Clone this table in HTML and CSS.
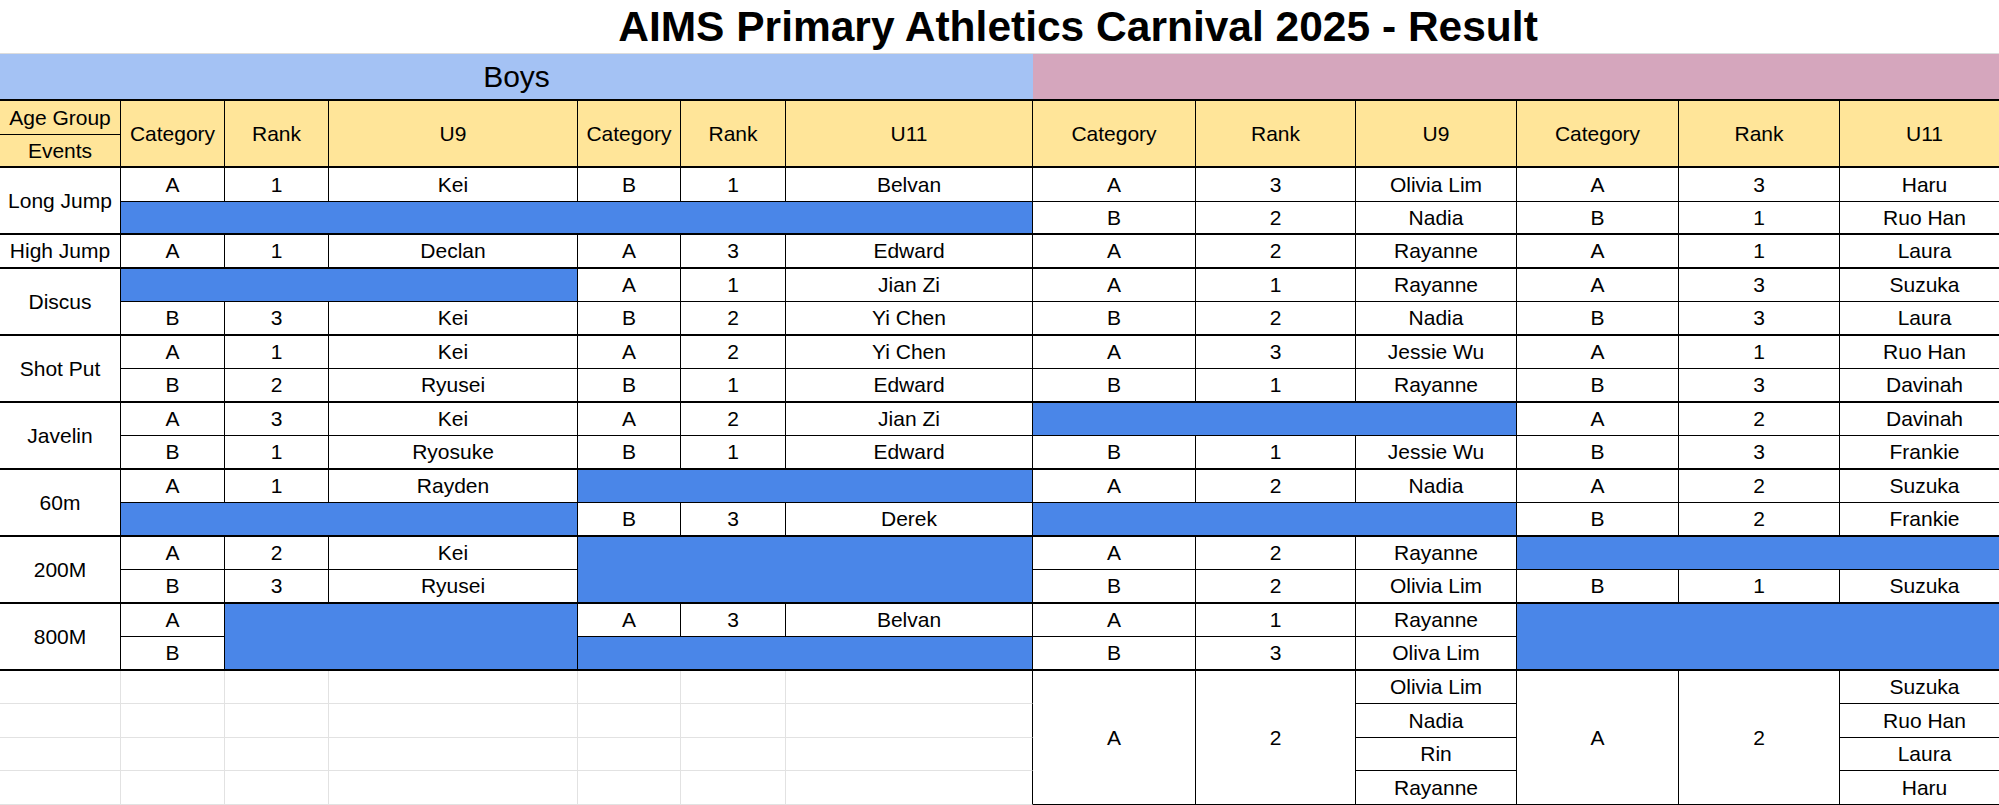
FILE: index.html
```html
<!DOCTYPE html>
<html lang="en">
<head>
<meta charset="utf-8">
<title>AIMS Primary Athletics Carnival 2025 - Result</title>
<link rel="stylesheet" href="styles.css">
</head>
<body>
<h1 class="title">AIMS Primary Athletics Carnival 2025 - Result</h1>
<div class="sheet">
  <div class="c band-boys g">Boys</div>
  <div class="c band-girls g"></div>

  <div class="c hd first">Age Group</div>
  <div class="c hd r2 g">Category</div>
  <div class="c hd r2 g">Rank</div>
  <div class="c hd r2 g">U9</div>
  <div class="c hd r2 g">Category</div>
  <div class="c hd r2 g">Rank</div>
  <div class="c hd r2 g">U11</div>
  <div class="c hd r2 g">Category</div>
  <div class="c hd r2 g">Rank</div>
  <div class="c hd r2 g">U9</div>
  <div class="c hd r2 g">Category</div>
  <div class="c hd r2 g">Rank</div>
  <div class="c hd r2 g">U11</div>
  <div class="c hd first g">Events</div>

  <!-- Long Jump -->
  <div class="c first r2 g">Long Jump</div>
  <div class="c">A</div><div class="c">1</div><div class="c">Kei</div>
  <div class="c">B</div><div class="c">1</div><div class="c">Belvan</div>
  <div class="c">A</div><div class="c">3</div><div class="c">Olivia Lim</div>
  <div class="c">A</div><div class="c">3</div><div class="c">Haru</div>
  <div class="c fill s6 g"></div>
  <div class="c g">B</div><div class="c g">2</div><div class="c g">Nadia</div>
  <div class="c g">B</div><div class="c g">1</div><div class="c g">Ruo Han</div>

  <!-- High Jump -->
  <div class="c first g">High Jump</div>
  <div class="c g">A</div><div class="c g">1</div><div class="c g">Declan</div>
  <div class="c g">A</div><div class="c g">3</div><div class="c g">Edward</div>
  <div class="c g">A</div><div class="c g">2</div><div class="c g">Rayanne</div>
  <div class="c g">A</div><div class="c g">1</div><div class="c g">Laura</div>

  <!-- Discus -->
  <div class="c first r2 g">Discus</div>
  <div class="c fill s3"></div>
  <div class="c">A</div><div class="c">1</div><div class="c">Jian Zi</div>
  <div class="c">A</div><div class="c">1</div><div class="c">Rayanne</div>
  <div class="c">A</div><div class="c">3</div><div class="c">Suzuka</div>
  <div class="c g">B</div><div class="c g">3</div><div class="c g">Kei</div>
  <div class="c g">B</div><div class="c g">2</div><div class="c g">Yi Chen</div>
  <div class="c g">B</div><div class="c g">2</div><div class="c g">Nadia</div>
  <div class="c g">B</div><div class="c g">3</div><div class="c g">Laura</div>

  <!-- Shot Put -->
  <div class="c first r2 g">Shot Put</div>
  <div class="c">A</div><div class="c">1</div><div class="c">Kei</div>
  <div class="c">A</div><div class="c">2</div><div class="c">Yi Chen</div>
  <div class="c">A</div><div class="c">3</div><div class="c">Jessie Wu</div>
  <div class="c">A</div><div class="c">1</div><div class="c">Ruo Han</div>
  <div class="c g">B</div><div class="c g">2</div><div class="c g">Ryusei</div>
  <div class="c g">B</div><div class="c g">1</div><div class="c g">Edward</div>
  <div class="c g">B</div><div class="c g">1</div><div class="c g">Rayanne</div>
  <div class="c g">B</div><div class="c g">3</div><div class="c g">Davinah</div>

  <!-- Javelin -->
  <div class="c first r2 g">Javelin</div>
  <div class="c">A</div><div class="c">3</div><div class="c">Kei</div>
  <div class="c">A</div><div class="c">2</div><div class="c">Jian Zi</div>
  <div class="c fill s3"></div>
  <div class="c">A</div><div class="c">2</div><div class="c">Davinah</div>
  <div class="c g">B</div><div class="c g">1</div><div class="c g">Ryosuke</div>
  <div class="c g">B</div><div class="c g">1</div><div class="c g">Edward</div>
  <div class="c g">B</div><div class="c g">1</div><div class="c g">Jessie Wu</div>
  <div class="c g">B</div><div class="c g">3</div><div class="c g">Frankie</div>

  <!-- 60m -->
  <div class="c first r2 g">60m</div>
  <div class="c">A</div><div class="c">1</div><div class="c">Rayden</div>
  <div class="c fill s3"></div>
  <div class="c">A</div><div class="c">2</div><div class="c">Nadia</div>
  <div class="c">A</div><div class="c">2</div><div class="c">Suzuka</div>
  <div class="c fill s3 g"></div>
  <div class="c g">B</div><div class="c g">3</div><div class="c g">Derek</div>
  <div class="c fill s3 g"></div>
  <div class="c g">B</div><div class="c g">2</div><div class="c g">Frankie</div>

  <!-- 200M -->
  <div class="c first r2 g">200M</div>
  <div class="c">A</div><div class="c">2</div><div class="c">Kei</div>
  <div class="c fill s3 r2 g"></div>
  <div class="c">A</div><div class="c">2</div><div class="c">Rayanne</div>
  <div class="c fill s3"></div>
  <div class="c g">B</div><div class="c g">3</div><div class="c g">Ryusei</div>
  <div class="c g">B</div><div class="c g">2</div><div class="c g">Olivia Lim</div>
  <div class="c g">B</div><div class="c g">1</div><div class="c g">Suzuka</div>

  <!-- 800M -->
  <div class="c first r2 g">800M</div>
  <div class="c">A</div>
  <div class="c fill s2 r2 g"></div>
  <div class="c">A</div><div class="c">3</div><div class="c">Belvan</div>
  <div class="c">A</div><div class="c">1</div><div class="c">Rayanne</div>
  <div class="c fill s3 r2 g"></div>
  <div class="c g">B</div>
  <div class="c fill s3 g"></div>
  <div class="c g">B</div><div class="c g">3</div><div class="c g">Oliva Lim</div>

  <!-- Blank rows + girls team block -->
  <div class="c blank first"></div><div class="c blank"></div><div class="c blank"></div><div class="c blank"></div>
  <div class="c blank"></div><div class="c blank"></div><div class="c blank edge"></div>
  <div class="c r4">A</div><div class="c r4">2</div><div class="c">Olivia Lim</div>
  <div class="c r4">A</div><div class="c r4">2</div><div class="c">Suzuka</div>

  <div class="c blank first"></div><div class="c blank"></div><div class="c blank"></div><div class="c blank"></div>
  <div class="c blank"></div><div class="c blank"></div><div class="c blank edge"></div>
  <div class="c">Nadia</div><div class="c">Ruo Han</div>

  <div class="c blank first"></div><div class="c blank"></div><div class="c blank"></div><div class="c blank"></div>
  <div class="c blank"></div><div class="c blank"></div><div class="c blank edge"></div>
  <div class="c">Rin</div><div class="c">Laura</div>

  <div class="c blank first"></div><div class="c blank"></div><div class="c blank"></div><div class="c blank"></div>
  <div class="c blank"></div><div class="c blank"></div><div class="c blank edge"></div>
  <div class="c">Rayanne</div><div class="c">Haru</div>
</div>
</body>
</html>
```

FILE: styles.css
```css
html, body {
  margin: 0;
  padding: 0;
  background: #ffffff;
}

body {
  width: 1999px;
  height: 805px;
  overflow: hidden;
  font-family: "Liberation Sans", Arial, sans-serif;
  color: #000000;
}

.title {
  margin: 0;
  width: 1999px;
  box-sizing: border-box;
  height: 53px;
  padding-left: 157px;
  text-align: center;
  font-size: 42.5px;
  font-weight: bold;
  line-height: 53px;
  white-space: nowrap;
}

.sheet {
  display: grid;
  width: max-content;
  grid-template-columns: 121px 104px 104px 249px 103px 105px 247px 163px 160px 161px 162px 161px 170px;
  grid-template-rows: 47px 34px 33px repeat(19, 33.5px);
  border-top: 1px solid #dcdcdc;
}

.c {
  display: flex;
  align-items: center;
  justify-content: center;
  box-sizing: border-box;
  border-right: 1px solid #000000;
  border-bottom: 1px solid #000000;
  background: #ffffff;
  font-size: 21px;
  line-height: 1;
  white-space: nowrap;
  overflow: hidden;
}

.g {
  border-bottom-width: 2px;
}

.s2 { grid-column: span 2; }
.s3 { grid-column: span 3; }
.s6 { grid-column: span 6; }
.r2 { grid-row: span 2; }
.r4 { grid-row: span 4; }

.band-boys {
  grid-column: span 7;
  background: #a4c2f4;
  border-right: none;
  font-size: 30px;
}

.band-girls {
  grid-column: span 6;
  background: #d5a6bd;
  border-right: none;
}

.hd {
  background: #ffe599;
}

.fill {
  background: #4a86e8;
}

.blank {
  border-right-color: #e2e2e2;
  border-bottom-color: #e2e2e2;
}

.blank.edge {
  border-right-color: #000000;
}
```
